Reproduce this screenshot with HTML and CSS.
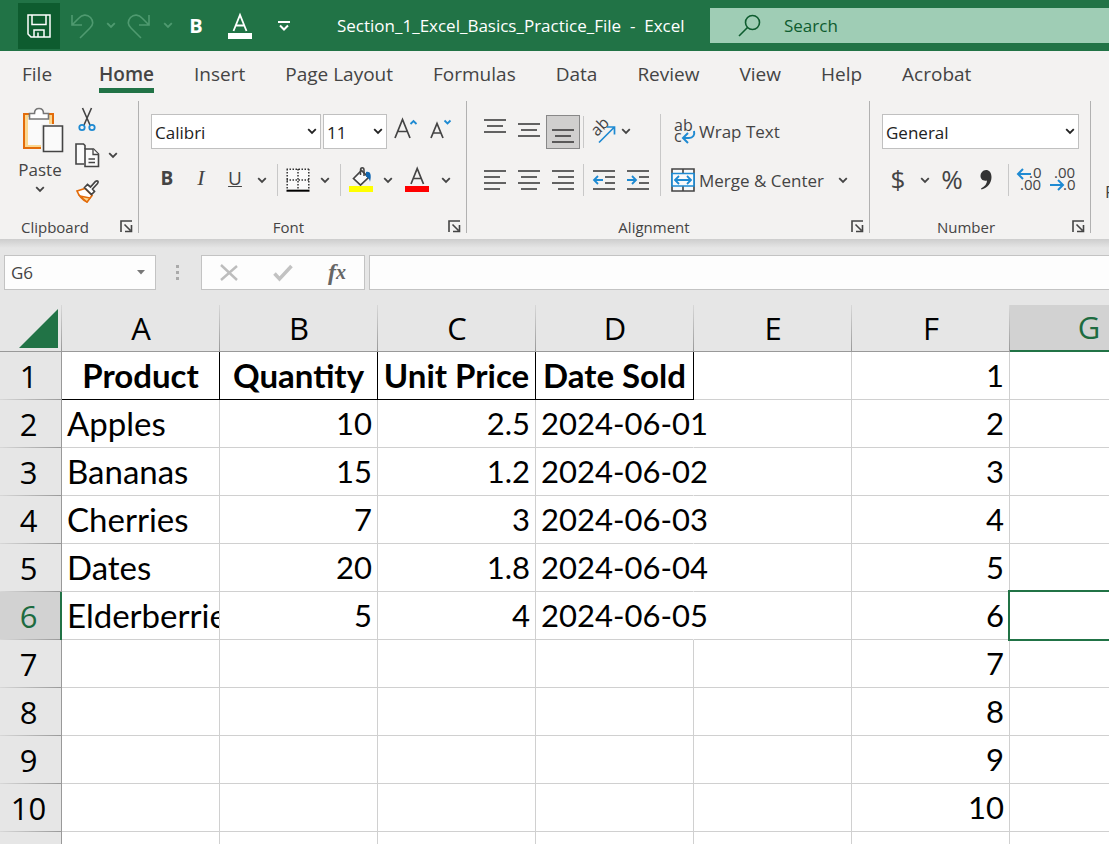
FILE: index.html
```html
<!DOCTYPE html>
<html lang="en">
<head>
    <meta charset="UTF-8">
    <meta name="viewport" content="width=device-width, initial-scale=1.0">
    <title>Section_1_Excel_Basics_Practice_File - Excel</title>
    <link rel="stylesheet" href="styles.css">
</head>
<body>
    <!-- Shared icons -->
    <svg class="defs" width="0" height="0" aria-hidden="true">
        <symbol id="chevron" viewBox="0 0 10 7"><path d="M1.2 1.2 5 5l3.800-3.800" fill="none" stroke="currentColor" stroke-width="1.800"/></symbol>
        <symbol id="launcher" viewBox="0 0 13 13"><path d="M1 12V1h11M4.500 4.500l6 6M11.500 5v6.500H5" fill="none" stroke="#444" stroke-width="1.600"/></symbol>
    </svg>

    <header class="titlebar">
        <div class="quick-access">
            <button class="qa save" aria-label="Save">
                <svg width="24" height="24" viewBox="0 0 24 24" fill="none" stroke="#fff" stroke-width="1.500"><path d="M1 1h22v22H4l-3-3zM5 1v9.500h14V1M7 23v-7h10v7M11 18.500V23"/></svg>
            </button>
            <button class="qa undo" aria-label="Undo">
                <svg width="24" height="26" viewBox="0 0 24 26" fill="none" stroke="#4f9a70" stroke-width="1.600"><path d="M2 2v10h10M2.500 11.500 9 5c3-3.500 8-4 11.500-.5 3 3.500 2.500 7.500-.5 10.500L10 25"/></svg>
            </button>
            <button class="qa-arrow faded" aria-label="Undo list"><svg width="10" height="7"><use href="#chevron"/></svg></button>
            <button class="qa redo" aria-label="Redo">
                <svg width="24" height="26" viewBox="0 0 24 26" fill="none" stroke="#4f9a70" stroke-width="1.600"><path d="M22 2v10H12M21.500 11.500 15 5C12 1.500 7 1 3.500 4.500.5 8 1 12 4 15l10 10"/></svg>
            </button>
            <button class="qa-arrow faded" aria-label="Redo list"><svg width="10" height="7"><use href="#chevron"/></svg></button>
            <button class="qa qa-bold" aria-label="Bold">B</button>
            <button class="qa" aria-label="Font Color">
                <svg width="24" height="28" viewBox="0 0 24 28"><path d="M5.500 19 12 3l6.500 16M8 13.500h8" fill="none" stroke="#fff" stroke-width="1.800"/><path d="M0 21h24v6H0z" fill="#fff"/></svg>
            </button>
            <button class="qa" aria-label="Customize Quick Access Toolbar">
                <svg width="12" height="12" viewBox="0 0 12 12" fill="none" stroke="#fff" stroke-width="2"><path d="M0 2h12M2 5.500l4 4 4-4"/></svg>
            </button>
        </div>
        <div class="doc-title">Section_1_Excel_Basics_Practice_File&nbsp; -&nbsp; Excel</div>
        <label class="search">
            <svg width="24" height="24" viewBox="0 0 24 24" fill="none" stroke="#0e5c2f" stroke-width="1.600"><circle cx="14.500" cy="8.500" r="7"/><path d="M9.500 13.500 1 22"/></svg>
            <input type="text" placeholder="Search" aria-label="Search">
        </label>
    </header>

    <nav class="tabs">
        <a href="#">File</a>
        <a href="#" class="active">Home</a>
        <a href="#">Insert</a>
        <a href="#">Page Layout</a>
        <a href="#">Formulas</a>
        <a href="#">Data</a>
        <a href="#">Review</a>
        <a href="#">View</a>
        <a href="#">Help</a>
        <a href="#">Acrobat</a>
    </nav>

    <div class="ribbon">
        <section class="group clipboard">
            <div class="clip-body">
                <button class="paste">
                    <svg width="42" height="46" viewBox="0 0 42 46">
                        <path d="M2 7h29v34H2z" fill="#fbd78f" stroke="#e36c0a" stroke-width="2"/>
                        <path d="M6 10h21v28H6z" fill="#fafafa"/>
                        <path d="M7.500 12V6.500h5C12.500 3 14 1.500 17 1.500S21.500 3 21.500 6.500h5V12z" fill="#fff" stroke="#777" stroke-width="1.600"/>
                        <path d="M19 17h23v29H19z" fill="#f3f2f1"/>
                        <path d="M21.500 19h19v25.500h-19z" fill="#fafafa" stroke="#444" stroke-width="1.600"/>
                    </svg>
                    <span>Paste</span>
                    <svg width="10" height="7"><use href="#chevron"/></svg>
                </button>
                <div class="clip-tools">
                    <button aria-label="Cut">
                        <svg width="24" height="25" viewBox="0 0 24 25" fill="none"><path d="M7.500 1 15 18M16.500 1 9 18" stroke="#444" stroke-width="1.600"/><circle cx="7" cy="20.500" r="2.700" stroke="#1e8ad2" stroke-width="1.800"/><circle cx="17" cy="20.500" r="2.700" stroke="#1e8ad2" stroke-width="1.800"/></svg>
                    </button>
                    <button class="copy" aria-label="Copy">
                        <svg width="24" height="25" viewBox="0 0 24 25" fill="#fafafa" stroke="#444" stroke-width="1.600"><path d="M9 21H1V1h7.500L10 2.500V6"/><path d="M10 6h8.500l5 5v12.500H10z"/><path d="M18 6v5.500h5.500M13.500 16h6.500M13.500 19.500h6.500" stroke-width="1.300"/></svg>
                        <svg width="10" height="7"><use href="#chevron"/></svg>
                    </button>
                    <button aria-label="Format Painter">
                        <svg width="24" height="25" viewBox="0 0 24 25"><path d="m2 12 8-2.500 7 7L12 23C7.500 21 4 17 2 12z" fill="#fff" stroke="#e36c0a" stroke-width="1.700"/><path d="m5 17 10 2-3 4z" fill="#fbd78f" stroke="#e36c0a" stroke-width="1.300"/><path d="m9.500 8.500 3-3 3 2.500 5-5.500c2-1.500 3.500 0 2 2l-5 5.500 2 2.500-3 3z" fill="#fff" stroke="#444" stroke-width="1.700"/></svg>
                    </button>
                </div>
            </div>
            <footer><span>Clipboard</span><button aria-label="Clipboard settings"><svg width="13" height="13"><use href="#launcher"/></svg></button></footer>
        </section>

        <section class="group font">
            <div class="row row-top">
                <div class="combo font-name">
                    <select aria-label="Font"><option>Calibri</option></select>
                    <svg width="10" height="7"><use href="#chevron"/></svg>
                </div>
                <div class="combo font-size">
                    <select aria-label="Font Size"><option>11</option></select>
                    <svg width="10" height="7"><use href="#chevron"/></svg>
                </div>
                <button class="tool" aria-label="Increase Font Size">
                    <svg width="24" height="28" viewBox="0 0 24 28" fill="none"><path d="M1 20 8.500 1.500 16 20M4 13.500h9" stroke="#444" stroke-width="1.700"/><path d="m16.500 6 3-3 3 3" stroke="#1e8ad2" stroke-width="1.800"/></svg>
                </button>
                <button class="tool" aria-label="Decrease Font Size">
                    <svg width="24" height="28" viewBox="0 0 24 28" fill="none"><path d="M3 20 9 5.500 15 20M5.500 15h7.500" stroke="#444" stroke-width="1.700"/><path d="m16.500 2.500 3 3 3-3" stroke="#1e8ad2" stroke-width="1.800"/></svg>
                </button>
            </div>
            <div class="row">
                <button class="tool letter bold">B</button>
                <button class="tool letter italic">I</button>
                <button class="tool letter underline">U</button>
                <button class="arrow" aria-label="Underline styles"><svg width="10" height="7"><use href="#chevron"/></svg></button>
                <i class="sep"></i>
                <button class="tool" aria-label="Borders">
                    <svg width="24" height="24" viewBox="0 0 24 24" fill="none" stroke="#333" stroke-width="1.500"><path d="M1 1h22v20H1z" fill="#fafafa" stroke="none"/><path d="M.5 1.200h23M.5 12h23M1.200 1v20M12 1v20M22.800 1v20" stroke-dasharray="1.500 1.500"/><path d="M.5 22.700h23" stroke="#000" stroke-width="2"/></svg>
                </button>
                <button class="arrow" aria-label="Border styles"><svg width="10" height="7"><use href="#chevron"/></svg></button>
                <i class="sep"></i>
                <button class="tool" aria-label="Fill Color">
                    <svg width="24" height="28" viewBox="0 0 24 28"><path d="m4.500 12.500 8-8 7 7-8 7.500z" fill="#fafafa" stroke="#444" stroke-width="1.700"/><path d="M11.500 9V4c0-3 3.500-3 3.500 0v6" fill="none" stroke="#444" stroke-width="1.500"/><path d="M17 6c4-1 6 2 4 10-.5-3-1.500-4-4-5.500z" fill="#1167b1"/><path d="M0 20h24v6H0z" fill="#ff0"/></svg>
                </button>
                <button class="arrow" aria-label="Fill colors"><svg width="10" height="7"><use href="#chevron"/></svg></button>
                <button class="tool font-color" aria-label="Font Color">
                    <svg width="24" height="28" viewBox="0 0 24 28"><path d="M6 18 12.200 2.500 18.500 18M8.500 12.500h7.500" fill="none" stroke="#444" stroke-width="1.700"/><path d="M0 20h24v6H0z" fill="red"/></svg>
                </button>
                <button class="arrow" aria-label="Font colors"><svg width="10" height="7"><use href="#chevron"/></svg></button>
            </div>
            <footer><span>Font</span><button aria-label="Font settings"><svg width="13" height="13"><use href="#launcher"/></svg></button></footer>
        </section>

        <section class="group alignment">
            <div class="align-body">
                <div class="align-tools">
                    <div class="row row-top">
                        <button class="tool" aria-label="Top Align"><svg width="22" height="26" viewBox="0 0 22 26" stroke="#333" stroke-width="1.600"><path d="M0 1h22M3 7h16M0 13h22"/></svg></button>
                        <button class="tool" aria-label="Middle Align"><svg width="22" height="26" viewBox="0 0 22 26" stroke="#333" stroke-width="1.600"><path d="M0 5h22M3 11h16M0 17h22"/></svg></button>
                        <button class="tool pressed" aria-label="Bottom Align"><svg width="22" height="26" viewBox="0 0 22 26" stroke="#333" stroke-width="1.600"><path d="M0 11h22M3 17h16M0 23h22"/></svg></button>
                        <i class="sep"></i>
                        <button class="tool" aria-label="Orientation">
                            <svg width="28" height="26" viewBox="0 0 28 26"><text x="0" y="0" transform="translate(7 18) rotate(-45)" font-size="16" fill="#444">ab</text><path d="M9 23.500 24 8.500M17 8h7.500v7.500" fill="none" stroke="#1e8ad2" stroke-width="1.700"/></svg>
                        </button>
                        <button class="arrow tight" aria-label="Orientation options"><svg width="10" height="7"><use href="#chevron"/></svg></button>
                    </div>
                    <div class="row">
                        <button class="tool" aria-label="Align Left"><svg width="22" height="20" viewBox="0 0 22 20" stroke="#333" stroke-width="1.600"><path d="M0 1h22M0 7h16M0 13h22M0 19h16"/></svg></button>
                        <button class="tool" aria-label="Center"><svg width="22" height="20" viewBox="0 0 22 20" stroke="#333" stroke-width="1.600"><path d="M0 1h22M3 7h16M0 13h22M3 19h16"/></svg></button>
                        <button class="tool" aria-label="Align Right"><svg width="22" height="20" viewBox="0 0 22 20" stroke="#333" stroke-width="1.600"><path d="M0 1h22M6 7h16M0 13h22M6 19h16"/></svg></button>
                        <i class="sep"></i>
                        <button class="tool" aria-label="Decrease Indent"><svg width="22" height="20" viewBox="0 0 22 20" fill="none" stroke="#333" stroke-width="1.600"><path d="M0 1h22M12 7h10M12 13h10M0 19h22"/><path d="M10 10H1M5 6l-4 4 4 4" stroke="#1e8ad2" stroke-width="1.800"/></svg></button>
                        <button class="tool" aria-label="Increase Indent"><svg width="22" height="20" viewBox="0 0 22 20" fill="none" stroke="#333" stroke-width="1.600"><path d="M0 1h22M12 7h10M12 13h10M0 19h22"/><path d="M0 10h9M5 6l4 4-4 4" stroke="#1e8ad2" stroke-width="1.800"/></svg></button>
                    </div>
                </div>
                <div class="wrap-tools">
                    <button class="row-top">
                        <svg width="24" height="26" viewBox="0 0 24 26"><text x="3" y="12" font-size="16" fill="#444">ab</text><text x="3" y="23" font-size="16" fill="#444">c</text><path d="M23 12c1 4-1 7-5 7h-5M17 14l-5 5 5 5" fill="none" stroke="#1e8ad2" stroke-width="2"/></svg>
                        <span>Wrap Text</span>
                    </button>
                    <button>
                        <svg width="24" height="24" viewBox="0 0 24 24" fill="none"><path d="M1 1h22v22H1zM12 1v22" fill="#fafafa" stroke="#444" stroke-width="1.600"/><path d="M1 5.500h22v12.500H1z" fill="#fafafa" stroke="#1e8ad2" stroke-width="1.700"/><path d="M4 12h16M8 8l-4 4 4 4M16 8l4 4-4 4" stroke="#1e8ad2" stroke-width="1.800"/></svg>
                        <span>Merge &amp; Center</span>
                        <svg class="merge-arrow" width="10" height="7"><use href="#chevron"/></svg>
                    </button>
                </div>
            </div>
            <footer><span>Alignment</span><button aria-label="Alignment settings"><svg width="13" height="13"><use href="#launcher"/></svg></button></footer>
        </section>

        <section class="group number">
            <div class="row row-top">
                <div class="combo format">
                    <select aria-label="Number Format"><option>General</option></select>
                    <svg width="10" height="7"><use href="#chevron"/></svg>
                </div>
            </div>
            <div class="row">
                <button class="tool symbol">$</button>
                <button class="arrow" aria-label="Accounting formats"><svg width="10" height="7"><use href="#chevron"/></svg></button>
                <button class="tool symbol">%</button>
                <button class="tool" aria-label="Comma Style">
                    <svg width="14" height="22" viewBox="0 0 14 22"><path d="M2 19.500c4-2 6-5 6-8C4 12.500 1.500 10 1.500 7S4 1 7 1s5.500 2.500 5.500 7c0 6-4 11-10 12.500z" fill="#333"/></svg>
                </button>
                <i class="sep"></i>
                <button class="tool" aria-label="Increase Decimal">
                    <svg width="26" height="26" viewBox="0 0 26 26"><text x="13" y="11" font-size="15" fill="#444">.0</text><text x="4" y="23" font-size="15" fill="#444">.00</text><path d="M15 7H2M7 2 2 7l5 5" fill="none" stroke="#1e8ad2" stroke-width="2"/></svg>
                </button>
                <button class="tool" aria-label="Decrease Decimal">
                    <svg width="26" height="26" viewBox="0 0 26 26"><text x="4" y="11" font-size="15" fill="#444">.00</text><text x="13" y="23" font-size="15" fill="#444">.0</text><path d="M0 18h13M8 13l5 5-5 5" fill="none" stroke="#1e8ad2" stroke-width="2"/></svg>
                </button>
            </div>
            <footer><span>Number</span><button aria-label="Number settings"><svg width="13" height="13"><use href="#launcher"/></svg></button></footer>
        </section>

        <section class="group styles">
            <button>Formatting</button>
        </section>
    </div>

    <div class="formula-bar">
        <div class="name-box">
            <input type="text" value="G6" aria-label="Name Box">
            <svg width="8" height="5" viewBox="0 0 8 5"><path d="M0 0h8L4 4.500z" fill="#777"/></svg>
        </div>
        <svg width="4" height="16" viewBox="0 0 4 16" fill="#aaa"><path d="M0 0h3v3H0zM0 6h3v3H0zM0 12h3v3H0z"/></svg>
        <div class="formula-buttons">
            <button aria-label="Cancel"><svg width="18" height="18" viewBox="0 0 18 18" fill="none" stroke="#bdbdbd" stroke-width="2.400"><path d="m1 1 16 15M17 2 1 16"/></svg></button>
            <button aria-label="Enter"><svg width="20" height="18" viewBox="0 0 20 18" fill="none" stroke="#c2c2c2" stroke-width="3.500"><path d="m1.500 9.500 5 5.500L18.500 2"/></svg></button>
            <button class="fx" aria-label="Insert Function">f<small>x</small></button>
        </div>
        <input class="formula" type="text" aria-label="Formula Bar">
    </div>

    <main class="sheet">
        <table>
            <colgroup><col class="row-col"><col><col><col><col><col><col><col></colgroup>
            <thead>
                <tr>
                    <th class="corner"><svg width="39" height="39" viewBox="0 0 39 39"><path d="M39 0v39H0z" fill="#217346"/></svg></th>
                    <th>A</th><th>B</th><th>C</th><th>D</th><th>E</th><th>F</th><th class="selected">G</th>
                </tr>
            </thead>
            <tbody>
                <tr class="titles"><th>1</th><td>Product</td><td>Quantity</td><td>Unit Price</td><td>Date Sold</td><td></td><td class="num">1</td><td></td></tr>
                <tr><th>2</th><td>Apples</td><td class="num">10</td><td class="num">2.5</td><td class="date">2024-06-01</td><td></td><td class="num">2</td><td></td></tr>
                <tr><th>3</th><td>Bananas</td><td class="num">15</td><td class="num">1.2</td><td class="date">2024-06-02</td><td></td><td class="num">3</td><td></td></tr>
                <tr><th>4</th><td>Cherries</td><td class="num">7</td><td class="num">3</td><td class="date">2024-06-03</td><td></td><td class="num">4</td><td></td></tr>
                <tr><th>5</th><td>Dates</td><td class="num">20</td><td class="num">1.8</td><td class="date">2024-06-04</td><td></td><td class="num">5</td><td></td></tr>
                <tr><th class="selected">6</th><td>Elderberries</td><td class="num">5</td><td class="num">4</td><td class="date">2024-06-05</td><td></td><td class="num">6</td><td class="current"></td></tr>
                <tr><th>7</th><td></td><td></td><td></td><td></td><td></td><td class="num">7</td><td></td></tr>
                <tr><th>8</th><td></td><td></td><td></td><td></td><td></td><td class="num">8</td><td></td></tr>
                <tr><th>9</th><td></td><td></td><td></td><td></td><td></td><td class="num">9</td><td></td></tr>
                <tr><th>10</th><td></td><td></td><td></td><td></td><td></td><td class="num">10</td><td></td></tr>
                <tr><th></th><td></td><td></td><td></td><td></td><td></td><td></td><td></td></tr>
            </tbody>
        </table>
    </main>
</body>
</html>
```

FILE: styles.css
```css
* {
    box-sizing: border-box;
}
body {
    margin: 0;
    height: 100vh;
    overflow: hidden;
    display: flex;
    flex-direction: column;
    background-color: #e6e6e6;
    color: #444;
    font-family: "Open Sans", "Noto Sans", sans-serif;
    font-size: 17px;
}
button, input, select {
    font: inherit;
    color: inherit;
    background: none;
    border: none;
    border-radius: 0;
    margin: 0;
    padding: 0;
    outline: none;
}
svg {
    display: block;
    flex: none;
    overflow: visible;
}
.defs {
    position: absolute;
}

/* Title bar */
.titlebar {
    display: flex;
    align-items: center;
    height: 51px;
    flex: none;
    background-color: #217346;
    color: #fff;
}
.quick-access {
    display: flex;
    align-items: center;
    width: 337px;
    flex: none;
    padding-left: 18px;
}
.qa {
    display: flex;
    align-items: center;
    justify-content: center;
    width: 44px;
    height: 46px;
}
.save {
    width: 42px;
    background-color: #0e5c2f;
}
.qa-arrow {
    width: 13px;
    display: flex;
    justify-content: center;
}
.faded {
    color: #4f9a70;
}
.qa-bold {
    font-size: 20px;
    font-weight: 700;
}
.doc-title {
    width: 373px;
    flex: none;
    white-space: nowrap;
}
.search {
    display: flex;
    align-items: center;
    gap: 22px;
    flex: 1;
    min-width: 0;
    height: 35px;
    padding-left: 28px;
    background-color: #9fcdb5;
    color: #0e5c2f;
}
.search input {
    flex: 1;
    min-width: 0;
}
.search input::placeholder {
    color: #0e5c2f;
    opacity: 1;
}

/* Tabs */
.tabs {
    display: flex;
    gap: 40px;
    flex: none;
    height: 50px;
    padding: 10px 22px 0;
    background-color: #f3f2f1;
    font-size: 19px;
    line-height: 27px;
}
.tabs a {
    height: 32px;
    color: #444;
    text-decoration: none;
    white-space: nowrap;
}
.tabs .active {
    margin-left: 7px;
    font-weight: 600;
    border-bottom: 5px solid #217346;
}

/* Ribbon */
.ribbon {
    display: flex;
    flex: none;
    height: 138px;
    padding-bottom: 6px;
    overflow: hidden;
    background-color: #f3f2f1;
}
.group {
    display: flex;
    flex-direction: column;
    flex: none;
    padding-top: 13px;
    border-right: 1px solid #b1b1b1;
}
.group footer {
    display: flex;
    margin-top: auto;
    height: 13px;
    font-size: 15px;
    line-height: 15px;
}
.group footer span {
    flex: 1;
    text-align: center;
}
.group footer button {
    width: 28px;
    padding-left: 10px;
}
.clipboard {
    width: 139px;
    padding-top: 6px;
}
.font {
    width: 328px;
}
.alignment {
    width: 403px;
}
.number {
    width: 221px;
}
.styles {
    flex: 1;
    border: none;
    padding: 79px 0 0 14px;
}
.styles button {
    line-height: 24px;
    text-align: left;
}
.clip-body {
    display: flex;
    padding-left: 16px;
}
.paste {
    display: flex;
    flex-direction: column;
    align-items: center;
    width: 48px;
    margin-right: 11px;
    line-height: 33px;
}
.paste svg:first-child {
    align-self: flex-end;
}
.clip-tools {
    display: flex;
    flex-direction: column;
    gap: 11px;
}
.copy {
    display: flex;
    align-items: center;
    gap: 9px;
}
.row {
    display: flex;
    align-items: center;
    height: 32px;
    padding-left: 11px;
}
.row-top {
    height: 35px;
    margin-bottom: 15px;
}
.font .row-top, .number .row-top {
    padding-left: 12px;
}
.tool {
    display: flex;
    align-items: center;
    justify-content: center;
    width: 34px;
    height: 34px;
}
.font-color {
    width: 38px;
}
.pressed {
    background-color: #d0cfce;
    border: 1px solid #888;
}
.arrow {
    display: flex;
    justify-content: center;
    width: 20px;
}
.tight {
    width: 10px;
}
.letter {
    padding-bottom: 4px;
    font-size: 19px;
}
.bold {
    font-weight: 700;
}
.italic {
    font-family: "Liberation Serif", serif;
    font-size: 22px;
    font-style: italic;
}
.underline {
    text-decoration: underline;
}
.sep {
    width: 1px;
    height: 32px;
    margin: 0 3px 0 5px;
    background-color: #c8c8c8;
}
.combo {
    display: grid;
    align-items: center;
    height: 35px;
    border: 1px solid #c0c0c0;
    background-color: #fff;
    color: #222;
}
.combo select, .combo svg {
    grid-area: 1 / 1;
}
.combo select {
    appearance: none;
    height: 33px;
    padding: 1px 0 0 3px;
}
.combo svg {
    justify-self: end;
    margin-right: 3px;
    pointer-events: none;
}
.font-name {
    width: 170px;
    margin-right: 2px;
}
.font-size {
    width: 64px;
    margin-right: 2px;
}
.format {
    width: 197px;
}
.align-body {
    display: flex;
}
.align-tools {
    width: 193px;
}
.align-tools .sep {
    margin-left: 3px;
}
.wrap-tools {
    border-left: 1px solid #c8c8c8;
    padding-left: 10px;
}
.wrap-tools button {
    display: flex;
    align-items: center;
    gap: 4px;
    height: 32px;
    white-space: nowrap;
}
.wrap-tools .row-top {
    height: 35px;
}
.merge-arrow {
    margin-left: 10px;
}
.symbol {
    padding-bottom: 3px;
    font-size: 26px;
}

/* Formula bar */
.formula-bar {
    display: flex;
    align-items: center;
    flex: none;
    height: 66px;
    padding: 1px 0 0 4px;
    background: linear-gradient(#cdcdcd, #e6e6e6 9px);
}
.name-box {
    display: flex;
    align-items: center;
    width: 152px;
    height: 35px;
    margin-right: 20px;
    padding: 0 10px 0 6px;
    border: 1px solid #c3c3c3;
    background-color: #fdfdfd;
}
.name-box input {
    flex: 1;
    min-width: 0;
}
.formula-buttons {
    display: flex;
    width: 164px;
    height: 35px;
    margin: 0 4px 0 21px;
    border: 1px solid #c3c3c3;
    background-color: #fdfdfd;
}
.formula-buttons button {
    display: flex;
    align-items: center;
    justify-content: center;
    flex: 1;
}
.formula-buttons .fx {
    font: italic bold 24px "Liberation Serif", serif;
    color: #666;
}
.fx small {
    font-size: 20px;
}
.formula {
    flex: 1;
    min-width: 0;
    height: 35px;
    border: 1px solid #c3c3c3;
    border-right: none;
    background-color: #fdfdfd;
}

/* Sheet */
.sheet {
    flex: 1;
    min-height: 0;
    overflow: hidden;
}
table {
    width: 1168px;
    table-layout: fixed;
    border-collapse: separate;
    border-spacing: 0;
    color: #000;
    font-family: Lato, sans-serif;
    font-size: 33px;
    line-height: 47px;
}
.row-col {
    width: 62px;
}
th, td {
    height: 48px;
    padding: 0 5px;
    white-space: nowrap;
}
th {
    padding: 0;
    font-family: "Open Sans", sans-serif;
    font-size: 31px;
    font-weight: 400;
    text-align: center;
}
thead th {
    height: 47px;
    line-height: 45px;
    border-bottom: 1px solid #999;
    background: linear-gradient(#d8d8d8, #999) right / 1px 100% no-repeat #e6e6e6;
}
tbody th {
    padding-right: 4px;
    border-right: 1px solid #999;
    background: linear-gradient(to right, #d8d8d8, #999) bottom / 100% 1px no-repeat #e6e6e6;
}
td {
    background-color: #fff;
    border-right: 1px solid #d0d0d0;
    border-bottom: 1px solid #d0d0d0;
    overflow: hidden;
}
thead .corner {
    padding: 4px 4px 3px 19px;
}
thead .selected {
    color: #1d6b40;
    background-color: #d2d2d2;
    border-bottom: 2px solid #217346;
}
tbody .selected {
    padding-right: 3px;
    color: #1d6b40;
    background-color: #d2d2d2;
    border-right: 2px solid #217346;
}
.num, .date {
    font-size: 31px;
}
.num {
    text-align: right;
}
.titles td:nth-child(-n+5) {
    padding: 0;
    text-align: center;
    font-weight: 700;
    border-color: #000;
}
.date {
    position: relative;
    overflow: visible;
    border-right-color: transparent;
}
.current {
    position: relative;
    overflow: visible;
}
.current::after {
    content: "";
    position: absolute;
    inset: -2px;
    border: 2px solid #217346;
}
```
